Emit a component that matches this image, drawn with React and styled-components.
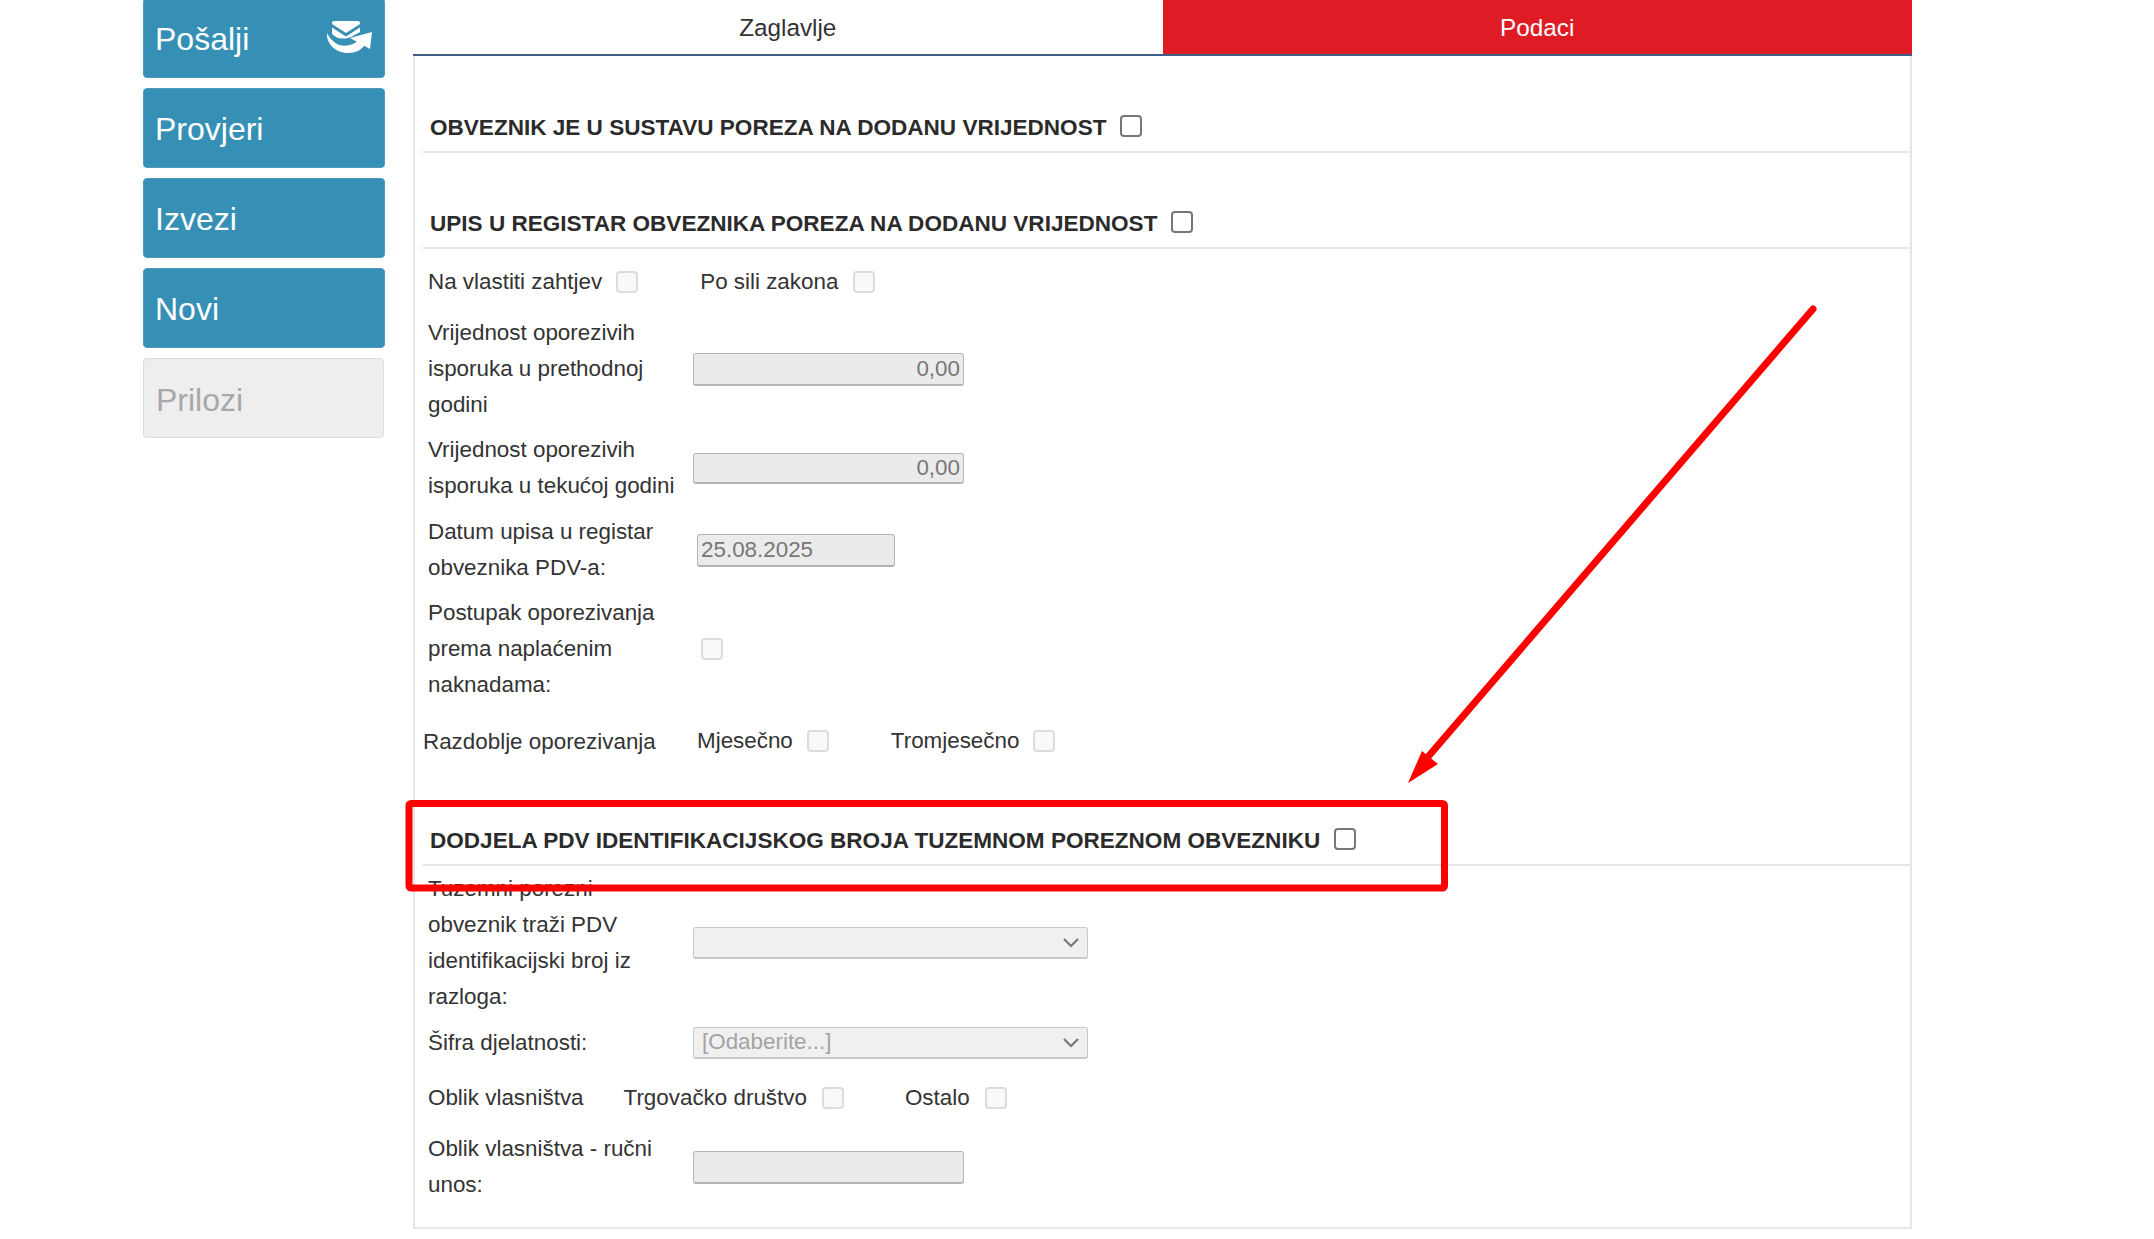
import React from "react";
import styled, { createGlobalStyle } from "styled-components";

const Global = createGlobalStyle`
  html, body { margin: 0; padding: 0; background: #fff; overflow: hidden; }
  body { font-family: "Liberation Sans", Arial, sans-serif; color: #333; }
`;

const Page = styled.div`
  position: relative;
  display: flex;
  align-items: flex-start;
  gap: 28px;
  width: 2154px;
  height: 1239px;
  padding-left: 143px;
  margin-top: -2px;
  box-sizing: border-box;
`;

const Sidebar = styled.nav`
  display: flex;
  flex-direction: column;
  gap: 10px;
  width: 242px;
  flex: none;
`;

const ActionButton = styled.button`
  display: flex;
  align-items: center;
  justify-content: space-between;
  height: 80px;
  width: ${(p) => (p.disabled ? "241px" : "242px")};
  padding: ${(p) => (p.disabled ? "4px 12px 0" : "2px 11px 0")};
  box-sizing: border-box;
  border: 1px solid ${(p) => (p.disabled ? "#dcdcdc" : "#4d9bbd")};
  border-radius: 4px;
  background: ${(p) => (p.disabled ? "#eeeeee" : "#368fb5")};
  color: ${(p) => (p.disabled ? "#a8a8a8" : "#fff")};
  font: 32px/1 "Liberation Sans", Arial, sans-serif;
  text-align: left;
`;

const IconSlot = styled.span`
  display: flex;
  margin-top: -2px;
`;

const Main = styled.main`
  width: 1499px;
  flex: none;
`;

const Tabs = styled.div`
  display: flex;
  height: 56px;
  border-bottom: 2px solid #3f5f86;
`;

const Tab = styled.div`
  flex: 1;
  display: flex;
  align-items: center;
  justify-content: center;
  padding-top: 4px;
  font-size: 24.3px;
  background: ${(p) => (p.$active ? "#df1c25" : "#fff")};
  color: ${(p) => (p.$active ? "#fff" : "#333")};
`;

const Panel = styled.div`
  box-sizing: border-box;
  height: 1173px;
  border: 2px solid #e6e6e6;
  border-top: 0;
  padding-left: 8px;
`;

const Section = styled.div`
  display: flex;
  align-items: center;
  gap: 14px;
  box-sizing: border-box;
  height: ${(p) => p.$height}px;
  padding: ${(p) => p.$height - 49}px 0 0 7px;
  border-bottom: 2px solid #e6e6e6;
  font-size: 22.55px;
  font-weight: 700;
  color: #2b2b2b;
`;

const Row = styled.div`
  display: flex;
  align-items: center;
  margin-top: ${(p) => p.$top}px;
  padding-left: ${(p) => p.$indent ?? 5}px;
  font-size: 22.4px;
  line-height: 36px;
`;

const Label = styled.div`
  flex: none;
  width: ${(p) => p.$width ?? 265}px;
`;

const Inline = styled.span`
  flex: none;
  margin-left: ${(p) => p.$left ?? 0}px;
  margin-top: ${(p) => p.$lift ?? 0}px;
`;

const Check = styled.input.attrs({ type: "checkbox" })`
  appearance: none;
  flex: none;
  box-sizing: border-box;
  width: 22px;
  height: 22px;
  margin: ${(p) => p.$lift ?? 0}px 0 0 ${(p) => p.$left ?? 0}px;
  border-radius: 4px;
  border: ${(p) => (p.$strong ? "2px solid #777" : "2px solid #dcdcdc")};
  background: ${(p) => (p.$strong ? "#fff" : "#f9f9f9")};
`;

const Field = styled.input`
  flex: none;
  box-sizing: border-box;
  width: ${(p) => p.$width ?? 271}px;
  height: ${(p) => p.$height ?? 33}px;
  margin-left: ${(p) => p.$left ?? 0}px;
  padding: 0 3px;
  border: 1px solid #b5b5b5;
  border-bottom-width: 2px;
  border-radius: 3px;
  background: #ebebeb;
  color: #777;
  font: 22.4px "Liberation Sans", Arial, sans-serif;
  text-align: ${(p) => (p.$right ? "right" : "left")};
  opacity: 1;
`;

const SelectBox = styled.div`
  flex: none;
  display: flex;
  align-items: center;
  justify-content: space-between;
  box-sizing: border-box;
  width: 395px;
  height: 32px;
  padding: 0 7px 0 8px;
  border: 1px solid #c9c9c9;
  border-bottom-width: 2px;
  border-radius: 3px;
  background: #f0f0f0;
  color: #a3a3a3;
  font-size: 22.4px;
  line-height: 1;
`;

const Annotation = styled.svg`
  position: absolute;
  left: 0;
  top: 2px;
  pointer-events: none;
`;

const SendIcon = () => (
  <svg width="50" height="40" viewBox="0 0 50 40" aria-hidden="true">
    <path d="M9 5a2 2 0 0 1 2-2h24a2 2 0 0 1 2 2v1L23 15 9 6z" fill="#fff" />
    <path d="M9 9.5 23 18.5 37 9.5V14l-9 5c-5 2-11 2-15 0l-4-3z" fill="#fff" />
    <path d="M4 15C3 25 12 35 25 35 33 35 38 32 42 27L36 22C30 28 20 29 14 26 9 23 6 19 4 15z" fill="#fff" />
    <path d="M49 14 47 31 27 20z" fill="#fff" />
  </svg>
);

const Chevron = () => (
  <svg width="18" height="11" viewBox="0 0 18 11" aria-hidden="true">
    <path d="M2 2l7 7 7-7" fill="none" stroke="#777" strokeWidth="2.2" />
  </svg>
);

export default function App() {
  return (
    <>
      <Global />
      <Page>
        <Sidebar>
          <ActionButton>Pošalji<IconSlot><SendIcon /></IconSlot></ActionButton>
          <ActionButton>Provjeri</ActionButton>
          <ActionButton>Izvezi</ActionButton>
          <ActionButton>Novi</ActionButton>
          <ActionButton disabled>Prilozi</ActionButton>
        </Sidebar>
        <Main>
          <Tabs>
            <Tab>Zaglavlje</Tab>
            <Tab $active>Podaci</Tab>
          </Tabs>
          <Panel>
            <Section $height={97}>
              OBVEZNIK JE U SUSTAVU POREZA NA DODANU VRIJEDNOST
              <Check $strong $lift={-3} />
            </Section>
            <Section $height={96}>
              UPIS U REGISTAR OBVEZNIKA POREZA NA DODANU VRIJEDNOST
              <Check $strong $lift={-3} />
            </Section>

            <Row $top={15}>
              <span>Na vlastiti zahtjev</span>
              <Check $left={14} $lift={-1} />
              <Inline $left={62}>Po sili zakona</Inline>
              <Check $left={15} $lift={-1} />
            </Row>
            <Row $top={15}>
              <Label>Vrijednost oporezivih<br />isporuka u prethodnoj<br />godini</Label>
              <Field disabled $right defaultValue="0,00" />
            </Row>
            <Row $top={9}>
              <Label>Vrijednost oporezivih<br />isporuka u tekućoj godini</Label>
              <Field disabled $right $height={31} defaultValue="0,00" />
            </Row>
            <Row $top={10}>
              <Label>Datum upisa u registar<br />obveznika PDV-a:</Label>
              <Field disabled $width={198} $left={4} defaultValue="25.08.2025" />
            </Row>
            <Row $top={9}>
              <Label>Postupak oporezivanja<br />prema naplaćenim<br />naknadama:</Label>
              <Check $left={8} />
            </Row>
            <Row $top={21} $indent={0}>
              <Label $width={274}>Razdoblje oporezivanja</Label>
              <Inline $lift={-3}>Mjesečno</Inline>
              <Check $left={14} $lift={-3} />
              <Inline $left={62} $lift={-3}>Tromjesečno</Inline>
              <Check $left={14} $lift={-3} />
            </Row>

            <Section $height={106}>
              DODJELA PDV IDENTIFIKACIJSKOG BROJA TUZEMNOM POREZNOM OBVEZNIKU
              <Check $strong $lift={-3} />
            </Section>

            <Row $top={5}>
              <Label>Tuzemni porezni<br />obveznik traži PDV<br />identifikacijski broj iz<br />razloga:</Label>
              <SelectBox><span /><Chevron /></SelectBox>
            </Row>
            <Row $top={10}>
              <Label>Šifra djelatnosti:</Label>
              <SelectBox><span>[Odaberite...]</span><Chevron /></SelectBox>
            </Row>
            <Row $top={19}>
              <span>Oblik vlasništva</span>
              <Inline $left={40}>Trgovačko društvo</Inline>
              <Check $left={15} />
              <Inline $left={61}>Ostalo</Inline>
              <Check $left={15} />
            </Row>
            <Row $top={15}>
              <Label>Oblik vlasništva - ručni<br />unos:</Label>
              <Field disabled defaultValue="" />
            </Row>
          </Panel>
        </Main>
        <Annotation width="2154" height="1239" viewBox="0 0 2154 1239">
          <rect x="409" y="803.5" width="1035.5" height="84.5" rx="2" fill="none" stroke="#ff0000" strokeWidth="7" />
          <line x1="1813" y1="309" x2="1427" y2="758" stroke="#ff0000" strokeWidth="7" strokeLinecap="round" />
          <polygon points="1408,783 1422,751 1438,764" fill="#ff0000" />
        </Annotation>
      </Page>
    </>
  );
}
